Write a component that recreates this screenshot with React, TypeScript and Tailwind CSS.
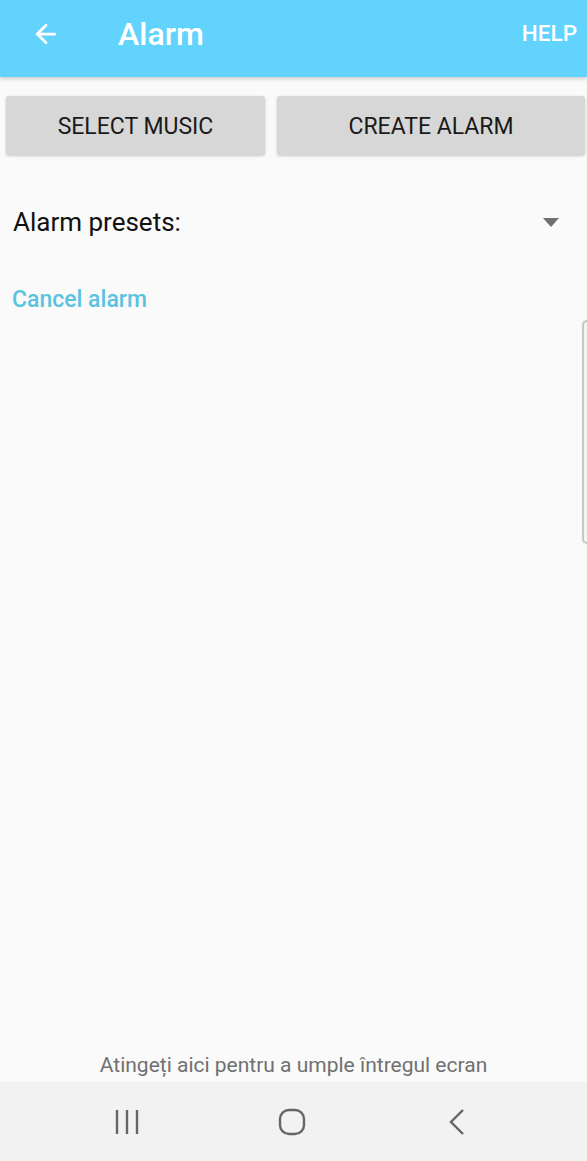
import { ArrowLeft } from "lucide-react";

export default function App() {
  return (
    <div
      className="w-[587px] h-[1161px] bg-[#fafafa] flex flex-col relative overflow-hidden"
      style={{ fontFamily: "Roboto, 'Liberation Sans', sans-serif" }}
    >
      <header className="h-[77px] bg-[#62d3fd] flex items-center pb-[10px] shadow-[0_2px_4px_rgba(0,0,0,0.18)] z-10">
        <div className="w-[118px] pl-[31px] flex items-center">
          <ArrowLeft className="w-[30px] h-[30px] text-white" strokeWidth={2.2} />
        </div>
        <h1 className="text-white text-[32px] font-medium flex-1">Alarm</h1>
        <span className="text-white text-[22.5px] font-medium pr-[10px]">HELP</span>
      </header>

      <div className="flex gap-[12px] pl-[6px] pr-[2px] pt-[19px]">
        <button className="w-[259px] h-[59px] pt-[3px] bg-[#d7d7d7] rounded-[3px] shadow-[0_1px_3px_rgba(0,0,0,0.2)] text-[#1a1a1a] text-[23px] font-normal">
          SELECT MUSIC
        </button>
        <button className="flex-1 h-[59px] pt-[3px] bg-[#d7d7d7] rounded-[3px] shadow-[0_1px_3px_rgba(0,0,0,0.2)] text-[#1a1a1a] text-[23px] font-normal">
          CREATE ALARM
        </button>
      </div>

      <div className="flex items-center justify-between pl-[13px] pr-[28px] mt-[47px] h-[40px]">
        <span className="text-[26px] text-[#111]">Alarm presets:</span>
        <svg width="16" height="9" viewBox="0 0 16 9">
          <path d="M0 0 L16 0 L8 9 Z" fill="#707070" />
        </svg>
      </div>

      <div className="pl-[12px] mt-[43px] leading-[30px]">
        <span className="text-[23px] font-medium text-[#5cc3df]">Cancel alarm</span>
      </div>

      <div className="flex-1" />

      <div className="text-center text-[21px] text-[#707070] pb-[2px] leading-[30px]">
        Atingeți aici pentru a umple întregul ecran
      </div>

      <nav className="h-[79px] bg-[#f2f2f2] flex items-center pl-[101px] gap-[113px]">
        <div className="w-[52px] flex justify-center">
          <svg width="26" height="26" viewBox="0 0 26 26">
            <path d="M3 1 V25 M13 1 V25 M23 1 V25" stroke="#666" strokeWidth="2.4" />
          </svg>
        </div>
        <div className="w-[52px] flex justify-center">
          <svg width="28" height="28" viewBox="0 0 28 28">
            <rect x="2" y="2" width="24" height="24" rx="9" fill="none" stroke="#666" strokeWidth="2.4" />
          </svg>
        </div>
        <div className="w-[52px] flex justify-center">
          <svg width="18" height="28" viewBox="0 0 18 28">
            <path d="M15 2 L3 14 L15 26" fill="none" stroke="#666" strokeWidth="2.4" />
          </svg>
        </div>
      </nav>

      <div className="absolute right-0 top-[320px] w-[5px] h-[224px] border-l-[2px] border-y-[2px] border-[#c8c8c8] rounded-l-[6px] bg-[#f5f5f5]" />
    </div>
  );
}
